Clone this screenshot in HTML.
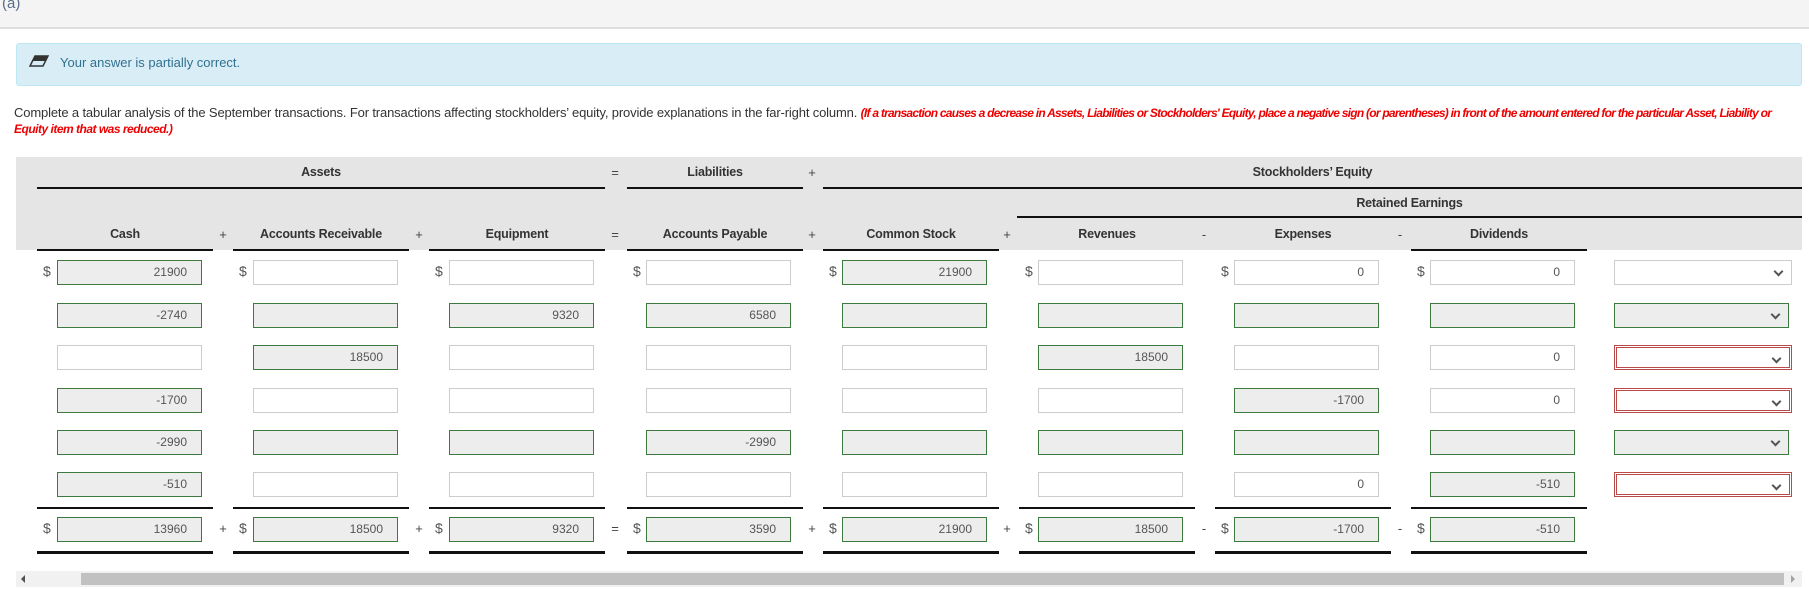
<!DOCTYPE html>
<html><head><meta charset="utf-8">
<style>
*{box-sizing:border-box;margin:0;padding:0}
body{width:1809px;height:589px;background:#fff;font-family:"Liberation Sans",Arial,sans-serif;position:relative;overflow:hidden;color:#333}
.a{position:absolute}
.top{left:0;top:0;width:1809px;height:29px;background:#f4f4f4;border-bottom:2px solid #ddd}
.alert{left:16px;top:43px;width:1786px;height:43px;background:#d9edf7;border:1px solid #bce8f1;border-radius:3px}
.band{left:16px;top:157px;width:1786px;height:93px;background:#e5e5e5}
.hl{position:absolute;height:2px;background:#111}
.ht{position:absolute;font-size:12.5px;font-weight:bold;color:#333;text-align:center;letter-spacing:-0.2px}
.op{position:absolute;font-size:13px;color:#444;width:14px;text-align:center}
.in{position:absolute;width:145px;height:25px;border:1px solid #ccc;background:#fff;font-size:12px;color:#555;text-align:right;padding-right:14px;line-height:23px}
.g{border:1.5px solid #3d7a3d;background:#ededed}
.d{position:absolute;left:1614px;width:178px;height:25px;border:1px solid #ccc;background:#fff}
.d.g{width:175px}
.d.r{border:3px double #b94a48}
.d::after{content:"";position:absolute;right:9px;top:7px;width:5px;height:5px;border-right:2px solid #555;border-bottom:2px solid #555;transform:rotate(45deg)}
.dl{position:absolute;font-size:14px;color:#555}
</style></head><body>
<div class="a top"></div>
<div class="a" style="left:2px;top:-5px;font-size:15px;color:#5a6e8a">(a)</div>
<div class="a alert"></div>
<svg class="a" style="left:29px;top:55px" width="20" height="12" viewBox="0 0 20 12"><path d="M6 1 L19 1 L14 11 L1 11 Z" fill="none" stroke="#333" stroke-width="1.5"/><path d="M6 1 L19 1 L16 6 L3.5 6 Z" fill="#333"/></svg>
<div class="a" style="left:60px;top:55px;font-size:13px;color:#31708f">Your answer is partially correct.</div>
<div class="a" style="left:14px;top:105px;font-size:13px;color:#333;white-space:nowrap;letter-spacing:-0.15px">Complete a tabular analysis of the September transactions. For transactions affecting stockholders’ equity, provide explanations in the far-right column. <b style="color:#e00;font-style:italic;font-size:12px;letter-spacing:-0.75px">(If a transaction causes a decrease in Assets, Liabilities or Stockholders' Equity, place a negative sign (or parentheses) in front of the amount entered for the particular Asset, Liability or</b></div>
<div class="a" style="left:14px;top:122px;font-size:12px;color:#e00;font-weight:bold;font-style:italic;letter-spacing:-0.5px">Equity item that was reduced.)</div>

<div class="a band"></div>
<div class="ht" style="left:37px;width:568px;top:165px">Assets</div>
<div class="op" style="left:608px;top:165px">=</div>
<div class="ht" style="left:627px;width:176px;top:165px">Liabilities</div>
<div class="op" style="left:805px;top:165px">+</div>
<div class="ht" style="left:823px;width:979px;top:165px">Stockholders’ Equity</div>
<div class="hl" style="left:37px;width:568px;top:187px"></div>
<div class="hl" style="left:627px;width:176px;top:187px"></div>
<div class="hl" style="left:823px;width:979px;top:187px"></div>
<div class="ht" style="left:1017px;width:785px;top:196px">Retained Earnings</div>
<div class="hl" style="left:1017px;width:785px;top:216px"></div>

<div class="ht" style="left:37px;width:176px;top:227px">Cash</div>
<div class="ht" style="left:233px;width:176px;top:227px">Accounts Receivable</div>
<div class="ht" style="left:429px;width:176px;top:227px">Equipment</div>
<div class="ht" style="left:627px;width:176px;top:227px">Accounts Payable</div>
<div class="ht" style="left:823px;width:176px;top:227px">Common Stock</div>
<div class="ht" style="left:1019px;width:176px;top:227px">Revenues</div>
<div class="ht" style="left:1215px;width:176px;top:227px">Expenses</div>
<div class="ht" style="left:1411px;width:176px;top:227px">Dividends</div>
<div class="op" style="left:216px;top:227px">+</div>
<div class="op" style="left:412px;top:227px">+</div>
<div class="op" style="left:608px;top:227px">=</div>
<div class="op" style="left:805px;top:227px">+</div>
<div class="op" style="left:1000px;top:227px">+</div>
<div class="op" style="left:1197px;top:227px">-</div>
<div class="op" style="left:1393px;top:227px">-</div>
<div class="hl" style="left:37px;width:176px;top:249px"></div>
<div class="hl" style="left:233px;width:176px;top:249px"></div>
<div class="hl" style="left:429px;width:176px;top:249px"></div>
<div class="hl" style="left:627px;width:176px;top:249px"></div>
<div class="hl" style="left:823px;width:176px;top:249px"></div>
<div class="hl" style="left:1411px;width:176px;top:249px"></div>

<!-- row 1 -->
<div class="dl" style="left:43px;top:263px">$</div>
<div class="dl" style="left:239px;top:263px">$</div>
<div class="dl" style="left:435px;top:263px">$</div>
<div class="dl" style="left:633px;top:263px">$</div>
<div class="dl" style="left:829px;top:263px">$</div>
<div class="dl" style="left:1025px;top:263px">$</div>
<div class="dl" style="left:1221px;top:263px">$</div>
<div class="dl" style="left:1417px;top:263px">$</div>
<div class="in g" style="left:57px;top:260px">21900</div>
<div class="in" style="left:253px;top:260px"></div>
<div class="in" style="left:449px;top:260px"></div>
<div class="in" style="left:646px;top:260px"></div>
<div class="in g" style="left:842px;top:260px">21900</div>
<div class="in" style="left:1038px;top:260px"></div>
<div class="in" style="left:1234px;top:260px">0</div>
<div class="in" style="left:1430px;top:260px">0</div>
<div class="d" style="top:260px"></div>
<!-- row 2 -->
<div class="in g" style="left:57px;top:303px">-2740</div>
<div class="in g" style="left:253px;top:303px"></div>
<div class="in g" style="left:449px;top:303px">9320</div>
<div class="in g" style="left:646px;top:303px">6580</div>
<div class="in g" style="left:842px;top:303px"></div>
<div class="in g" style="left:1038px;top:303px"></div>
<div class="in g" style="left:1234px;top:303px"></div>
<div class="in g" style="left:1430px;top:303px"></div>
<div class="d g" style="top:303px;border:1.5px solid #3d7a3d;background:#ededed"></div>
<!-- row 3 -->
<div class="in" style="left:57px;top:345px"></div>
<div class="in g" style="left:253px;top:345px">18500</div>
<div class="in" style="left:449px;top:345px"></div>
<div class="in" style="left:646px;top:345px"></div>
<div class="in" style="left:842px;top:345px"></div>
<div class="in g" style="left:1038px;top:345px">18500</div>
<div class="in" style="left:1234px;top:345px"></div>
<div class="in" style="left:1430px;top:345px">0</div>
<div class="d r" style="top:345px"></div>
<!-- row 4 -->
<div class="in g" style="left:57px;top:388px">-1700</div>
<div class="in" style="left:253px;top:388px"></div>
<div class="in" style="left:449px;top:388px"></div>
<div class="in" style="left:646px;top:388px"></div>
<div class="in" style="left:842px;top:388px"></div>
<div class="in" style="left:1038px;top:388px"></div>
<div class="in g" style="left:1234px;top:388px">-1700</div>
<div class="in" style="left:1430px;top:388px">0</div>
<div class="d r" style="top:388px"></div>
<!-- row 5 -->
<div class="in g" style="left:57px;top:430px">-2990</div>
<div class="in g" style="left:253px;top:430px"></div>
<div class="in g" style="left:449px;top:430px"></div>
<div class="in g" style="left:646px;top:430px">-2990</div>
<div class="in g" style="left:842px;top:430px"></div>
<div class="in g" style="left:1038px;top:430px"></div>
<div class="in g" style="left:1234px;top:430px"></div>
<div class="in g" style="left:1430px;top:430px"></div>
<div class="d g" style="top:430px;border:1.5px solid #3d7a3d;background:#ededed"></div>
<!-- row 6 -->
<div class="in g" style="left:57px;top:472px">-510</div>
<div class="in" style="left:253px;top:472px"></div>
<div class="in" style="left:449px;top:472px"></div>
<div class="in" style="left:646px;top:472px"></div>
<div class="in" style="left:842px;top:472px"></div>
<div class="in" style="left:1038px;top:472px"></div>
<div class="in" style="left:1234px;top:472px">0</div>
<div class="in g" style="left:1430px;top:472px">-510</div>
<div class="d r" style="top:472px"></div>

<!-- totals lines -->
<div class="hl" style="left:37px;width:176px;top:507px;height:1.5px"></div>
<div class="hl" style="left:233px;width:176px;top:507px;height:1.5px"></div>
<div class="hl" style="left:429px;width:176px;top:507px;height:1.5px"></div>
<div class="hl" style="left:627px;width:176px;top:507px;height:1.5px"></div>
<div class="hl" style="left:823px;width:176px;top:507px;height:1.5px"></div>
<div class="hl" style="left:1019px;width:176px;top:507px;height:1.5px"></div>
<div class="hl" style="left:1215px;width:176px;top:507px;height:1.5px"></div>
<div class="hl" style="left:1411px;width:176px;top:507px;height:1.5px"></div>
<div class="hl" style="left:37px;width:176px;top:551px;height:3px"></div>
<div class="hl" style="left:233px;width:176px;top:551px;height:3px"></div>
<div class="hl" style="left:429px;width:176px;top:551px;height:3px"></div>
<div class="hl" style="left:627px;width:176px;top:551px;height:3px"></div>
<div class="hl" style="left:823px;width:176px;top:551px;height:3px"></div>
<div class="hl" style="left:1019px;width:176px;top:551px;height:3px"></div>
<div class="hl" style="left:1215px;width:176px;top:551px;height:3px"></div>
<div class="hl" style="left:1411px;width:176px;top:551px;height:3px"></div>
<!-- totals -->
<div class="dl" style="left:43px;top:520px">$</div>
<div class="dl" style="left:239px;top:520px">$</div>
<div class="dl" style="left:435px;top:520px">$</div>
<div class="dl" style="left:633px;top:520px">$</div>
<div class="dl" style="left:829px;top:520px">$</div>
<div class="dl" style="left:1025px;top:520px">$</div>
<div class="dl" style="left:1221px;top:520px">$</div>
<div class="dl" style="left:1417px;top:520px">$</div>
<div class="op" style="left:216px;top:521px">+</div>
<div class="op" style="left:412px;top:521px">+</div>
<div class="op" style="left:608px;top:521px">=</div>
<div class="op" style="left:805px;top:521px">+</div>
<div class="op" style="left:1000px;top:521px">+</div>
<div class="op" style="left:1197px;top:521px">-</div>
<div class="op" style="left:1393px;top:521px">-</div>
<div class="in g" style="left:57px;top:517px">13960</div>
<div class="in g" style="left:253px;top:517px">18500</div>
<div class="in g" style="left:449px;top:517px">9320</div>
<div class="in g" style="left:646px;top:517px">3590</div>
<div class="in g" style="left:842px;top:517px">21900</div>
<div class="in g" style="left:1038px;top:517px">18500</div>
<div class="in g" style="left:1234px;top:517px">-1700</div>
<div class="in g" style="left:1430px;top:517px">-510</div>

<!-- scrollbar -->
<div class="a" style="left:16px;top:571px;width:1786px;height:16px;background:#f1f1f1"></div>
<div class="a" style="left:81px;top:573px;width:1703px;height:12px;background:#c1c1c1"></div>
<div class="a" style="left:21px;top:575px;width:0;height:0;border-top:4px solid transparent;border-bottom:4px solid transparent;border-right:4px solid #505050"></div>
<div class="a" style="left:1791px;top:575px;width:0;height:0;border-top:4px solid transparent;border-bottom:4px solid transparent;border-left:4px solid #a3a3a3"></div>
</body></html>
